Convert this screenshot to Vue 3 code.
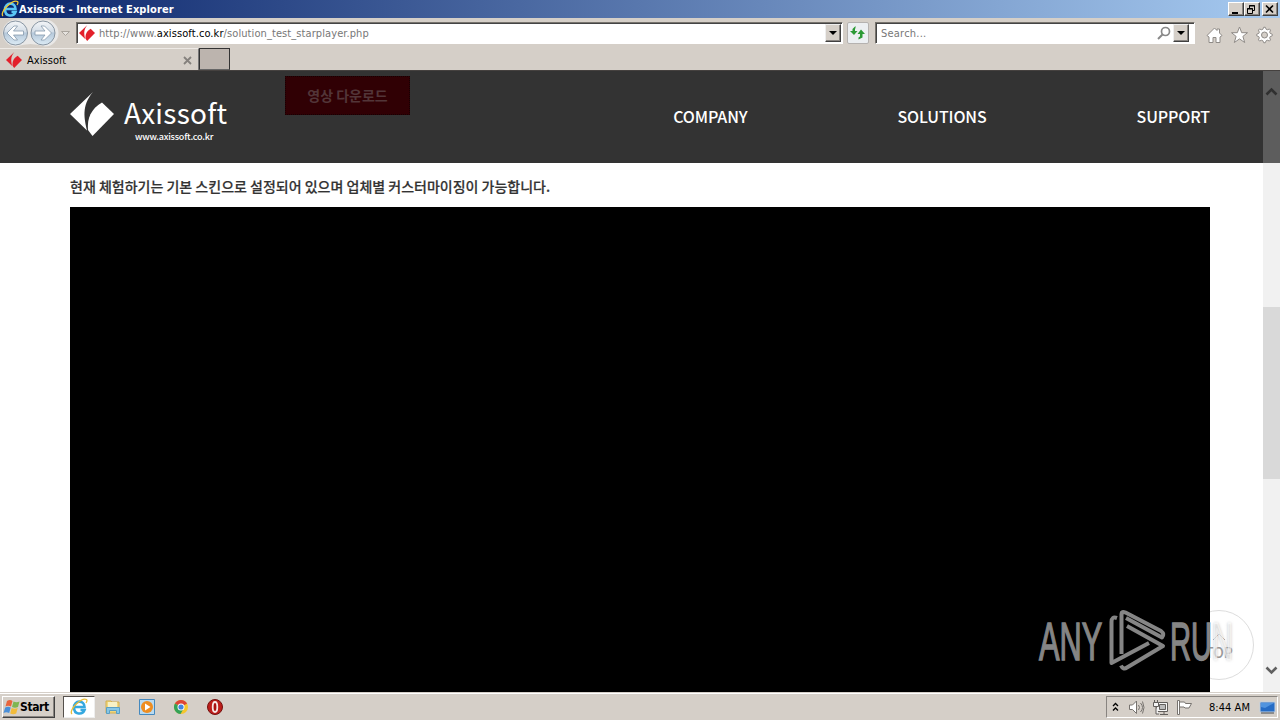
<template>
  <div class="screen">
    <div class="titlebar">
      <svg class="ie" width="18" height="18" viewBox="0 0 18 18">
        <path d="M4 9h10.500C14.500 1.500 4 2 4 9.500s8.500 7.500 10.500 2.500h-4" fill="none" stroke="#5bc5f5" stroke-width="2.600" />
        <path d="M2 16C-2 12 12-1 16.500 1.500c1 1 .5 2-.5 3.500" fill="none" stroke="#f2ca35" stroke-width="1.300" />
      </svg>
      <span class="title">Axissoft - Internet Explorer</span>
      <div class="winbtns">
        <button><svg width="13" height="11"><path d="M3 8h6v2H3z" /></svg></button>
        <button><svg width="13" height="11"><path d="M4.500 4V1.500h5v5H8M4 2h6M2.500 4.500h5v5h-5zM2 5h6" fill="none" stroke="#000" /></svg></button>
        <button class="gap"><svg width="13" height="11"><path d="M3 1.500l7 7M10 1.500l-7 7" stroke="#000" stroke-width="1.600" /></svg></button>
      </div>
    </div>

    <div class="navbar">
      <svg class="arrows" width="75" height="30" viewBox="0 0 75 30">
        <defs>
          <linearGradient id="orb" x1="0" y1="0" x2="0" y2="1">
            <stop offset="0" stop-color="#f4f6f8" /><stop offset=".45" stop-color="#d3dde7" />
            <stop offset=".5" stop-color="#b5c8da" /><stop offset="1" stop-color="#dcebf5" />
          </linearGradient>
        </defs>
        <path d="M15 1.500h29a13 13 0 0 1 0 27Q36 26 29.500 26T15 28.500a13 13 0 0 1 0-27z" fill="#e9e8e7" />
        <g v-for="x in [14.5, 42]" :key="x">
          <circle :cx="x" cy="15" r="12" fill="url(#orb)" stroke="#8996a3" />
          <path :transform="`translate(${x} 15) scale(${x > 20 ? -1 : 1} 1)`" d="M-8.500 0l7-7h3.500L-2-2H8v4H-2l4 5h-3.500z" fill="#fff" stroke="#8599ac" stroke-width=".8" />
        </g>
        <path d="M60.500 13.500h8l-4 4z" fill="#e6e3df" stroke="#aaa59e" />
      </svg>
      <div class="field address">
        <svg class="fav" width="16" height="16" viewBox="0 0 44 44"><path :d="logoLeft" /><path :d="logoRight" /></svg>
        <span class="url">http://www.<b>axissoft.co.kr</b>/solution_test_starplayer.php</span>
        <span class="drop"><i></i></span>
      </div>
      <div class="refresh">
        <svg width="18" height="18" viewBox="0 0 18 18" fill="#2b9a35"><path d="M1 7h2.500V5l3-3v2L6 5v2h2.500L5 11zM8.500 10L12 5.500 16 10h-2.500v3.500l-4 2v-2l1.500-1V10z" /></svg>
      </div>
      <div class="field search">
        <span>Search...</span>
        <svg width="14" height="15" viewBox="0 0 14 15"><circle cx="8.500" cy="5.500" r="4" fill="none" stroke="#888" stroke-width="1.700" /><path d="M5.500 8.500L1 13" stroke="#888" stroke-width="2" /></svg>
        <span class="drop"><i></i></span>
      </div>
      <div class="tools">
        <svg width="17" height="18" viewBox="0 0 17 18"><path d="M1 9.500L8.500 2l2.500 2.500V3h2.500v4L16 9.500 14 11v5.500h-4v-5H7v5H3V11z" /></svg>
        <svg width="17" height="18" viewBox="0 0 17 18"><path d="M8.500 1l2.200 5.700h5.800l-4.600 3.700 1.800 6.100-5.200-3.600-5.200 3.600 1.800-6.100L.5 6.700h5.800z" /></svg>
        <svg width="17" height="18" viewBox="0 0 17 18"><path :d="gear" /><circle cx="8.500" cy="9" r="3" fill="#d5cfc8" /></svg>
      </div>
    </div>

    <div class="tabs">
      <div class="tab">
        <svg class="fav" width="16" height="16" viewBox="0 0 44 44"><path :d="logoLeft" /><path :d="logoRight" /></svg>
        <span>Axissoft</span>
        <svg class="close" width="9" height="9"><path d="M1 1l7 7M8 1L1 8" stroke="#85817d" stroke-width="1.800" /></svg>
      </div>
      <div class="newtab"></div>
    </div>

    <div class="viewport">
      <div class="page">
        <header>
          <div class="brand">
            <svg width="44" height="44" viewBox="0 0 44 44"><path :d="logoLeft" /><path :d="logoRight" /></svg>
            <div class="names">
              <span class="name">Axissoft</span>
              <span class="site">www.axissoft.co.kr</span>
            </div>
          </div>
          <a class="download">영상 다운로드</a>
          <nav>
            <a v-for="m in menu" :key="m">{{ m }}</a>
          </nav>
        </header>
        <p class="notice">현재 체험하기는 기본 스킨으로 설정되어 있으며 업체별 커스터마이징이 가능합니다.</p>
        <div class="player"></div>
        <div class="top"><svg width="14" height="8"><path d="M1 7l6-6 6 6" fill="none" stroke="#aaa" /></svg><span>TOP</span></div>
      </div>
      <div class="scrollbar">
        <div class="dark"><svg width="13" height="9"><path d="M1.500 7.500l5-5 5 5" fill="none" stroke="#303030" stroke-width="2.600" /></svg></div>
        <div class="thumb"></div>
        <svg class="down" width="13" height="9"><path d="M1.500 1.500l5 5 5-5" fill="none" stroke="#606060" stroke-width="2.600" /></svg>
      </div>

      <div class="watermark">
        <span class="any">ANY</span>
        <svg width="58" height="64" viewBox="0 0 58 64" fill="none" stroke="#858585" stroke-width="4" stroke-linejoin="round">
          <path d="M9 9Q3.500 7 3.500 13V54L41 34" />
          <path d="M13.500 45V5q0-3 4-1.500L53 22q4 3 1 6.500L18 9" />
          <path d="M19 17L55 37 19 58.500q-4 2.500-6-2" />
        </svg>
        <span class="run">RU<i>N</i></span>
      </div>
    </div>

    <div class="taskbar">
      <button class="start">
        <svg width="18" height="17" viewBox="0 0 18 17">
          <path d="M4 2q3-2 5.500 0L8 7.500Q5 6 2.500 7.500z" fill="#e9653c" />
          <path d="M10.500 2.500q3 1.500 6 0L15 8q-3 1.500-6 0z" fill="#7fb652" />
          <path d="M2.200 8.500q3-1.500 5.500 0L6.200 14q-3-1.500-5.700 0z" fill="#4a8fd8" />
          <path d="M8.700 9q3 1.500 6 0l-1.500 5.500q-3 1.500-6 0z" fill="#f2bc3b" />
        </svg>
        <span>Start</span>
      </button>
      <div class="task">
        <svg width="18" height="18" viewBox="0 0 18 18">
          <path d="M4 9h10.500C14.500 1.500 4 2 4 9.500s8.500 7.500 10.500 2.500h-4" fill="none" stroke="#35a8df" stroke-width="2.600" />
          <path d="M2 16C-2 12 12-1 16.500 1.500c1 1 .5 2-.5 3.500" fill="none" stroke="#e9bd38" stroke-width="1.300" />
        </svg>
      </div>
      <div class="quick">
        <svg width="18" height="18" viewBox="0 0 18 18"><path d="M2 3h5l1 1h7v11H2z" fill="#f0d67d" stroke="#d2af51" /><path d="M4 4h9v5H4z" fill="#f7f1c6" /><path d="M2.500 9.500h13v6h-3v-3h-7v3h-3z" fill="#86c6e6" stroke="#5a9fc4" /></svg>
        <svg width="18" height="18" viewBox="0 0 18 18"><path d="M1.500 1.500h15v15h-15z" fill="#b9daf0" stroke="#4589be" /><circle cx="9" cy="9" r="6" fill="#ee8d20" /><path d="M7 5.500v7l5.500-3.500z" fill="#fff" /></svg>
        <svg width="18" height="18" viewBox="0 0 18 18"><circle cx="9" cy="9" r="7" fill="#f5c62d" /><path d="M9 9L2.900 5.500A7 7 0 0 1 15.100 5.500z" fill="#dd4437" /><path d="M9 9L2.900 5.500A7 7 0 0 0 8.500 16l3.500-6z" fill="#35a257" /><circle cx="9" cy="9" r="3.500" fill="#fff" /><circle cx="9" cy="9" r="2.600" fill="#4384e0" /></svg>
        <svg width="18" height="18" viewBox="0 0 18 18"><circle cx="9" cy="9" r="7.500" fill="#bd1e1b" stroke="#74100e" /><ellipse cx="9" cy="9" rx="2.300" ry="5" fill="#aa1110" stroke="#f6e7e5" stroke-width="1.800" /></svg>
      </div>
      <div class="tray">
        <svg width="7" height="10"><path d="M1 4l2.500-2.500L6 4M1 8.500L3.500 6 6 8.500" fill="none" stroke="#000" stroke-width="1.300" /></svg>
        <svg class="vol" width="17" height="17" fill="#fff" stroke="#77736f"><path d="M1.500 6h3l4-4v12.500l-4-4h-3z" /><path d="M10.500 6q2 2.500 0 5M12.500 4q4 4.500 0 9M14.500 2.500q3 6 0 12" fill="none" /></svg>
        <svg class="net" width="18" height="17" fill="#f5f5f5" stroke="#625f5c"><path d="M4.500 3.500h11v9h-11zM8 15.500h8M12 13v2" /><path d="M7.500 5.500h6v5h-6z" fill="#bbb" /><path d="M1.500 3.500h5v4h-5zM2.500 1v2M5.500 1v2M4 8v7h3" /></svg>
        <svg class="flag" width="17" height="17" fill="#fff" stroke="#77736f"><path d="M1.500 1.500h2v14h-2zM3.500 3h5l1 1.500h6L13 9H9L8 8H3.500z" /></svg>
        <time>8:44 AM</time>
        <svg class="desk" width="17" height="15"><path d="M1 2h15v10H1z" fill="#266cc5" stroke="#c1d0e0" /><path d="M2 3h13l-9 5-4-1z" fill="#5194df" /><path d="M2 13h13" stroke="#474b50" /></svg>
      </div>
    </div>
  </div>
</template>

<script setup>
const menu = ["COMPANY", "SOLUTIONS", "SUPPORT"];

// both halves of the diamond mark
const logoLeft = "M23 0L0 22 17 38.500C14.500 27 11 14 23 0z";
const logoRight = "M32 10.500L44 22 22.500 44 18 38C17 26 21 17 32 10.500z";

// outline of an eight toothed wheel
const gear = "M" + Array.from({ length: 32 }, (_, i) => {
  const r = i % 4 < 2 ? 7.8 : 5.9;
  const a = (i - 0.5) * Math.PI / 16;
  return (8.5 + r * Math.cos(a)).toFixed(2) + " " + (9 + r * Math.sin(a)).toFixed(2);
}).join("L") + "z";
</script>

<style>
body {
  overflow: hidden;
}
</style>

<style scoped>
* {
  box-sizing: border-box;
}

.screen {
  width: 1280px;
  height: 720px;
  display: flex;
  flex-direction: column;
  background: #d5cfc8;
  font: 11px "DejaVu Sans Condensed", "DejaVu Sans", sans-serif;
  overflow: hidden;
}

svg {
  display: block;
  flex: none;
}

.titlebar {
  height: 18px;
  flex: none;
  display: flex;
  align-items: center;
  padding: 0 2px 0 1px;
  background: linear-gradient(90deg, #0b256b, #a6caf0);
  color: #fff;
  font-weight: bold;
}

.title {
  width: 160px;
  white-space: nowrap;
  letter-spacing: 0.1px;
}

.winbtns {
  margin-left: auto;
  display: flex;
}

button {
  padding: 0;
  border: 1px solid;
  border-color: #fff #404040 #404040 #fff;
  background: #d5cfc8;
  box-shadow: inset -1px -1px #888480;
  color: #000;
  font: inherit;
}

.winbtns button {
  width: 16px;
  height: 14px;
}

.winbtns .gap {
  margin-left: 2px;
}

.navbar {
  height: 30px;
  flex: none;
  display: flex;
  align-items: flex-start;
  padding-left: 1px;
}

.field {
  display: flex;
  align-items: center;
  height: 22px;
  margin-top: 4px;
  background: #fff;
  border: 1px solid;
  border-color: #77736d #fff #fff #77736d;
  box-shadow: inset 1px 1px #444;
  color: #777;
}

.address {
  width: 767px;
  padding: 0 2px;
}

.fav {
  fill: #e3202b;
}

.url {
  margin-left: 4px;
  padding-top: 1px;
  white-space: nowrap;
  letter-spacing: 0.09px;
}

.url b {
  font-weight: normal;
  color: #000;
}

.drop {
  width: 16px;
  height: 18px;
  display: flex;
  align-items: center;
  justify-content: center;
  background: #d5cfc8;
  border: 1px solid;
  border-color: #eee #404040 #404040 #eee;
  box-shadow: inset -1px -1px #888480;
}

.address .drop {
  margin-left: auto;
  margin-right: -1px;
}

.drop i {
  border: 4px solid transparent;
  border-top-color: #000;
  border-bottom: 0;
}

.refresh {
  width: 22px;
  height: 22px;
  margin: 4px 6px 0 4px;
  padding: 1px;
  border: 1px solid #b5b2b0;
  border-radius: 2px;
  background: #eceff2;
}

.search {
  width: 320px;
  padding: 0 5px 0 5px;
}

.search svg {
  margin: 0 2px 0 auto;
}

.search > span:first-child {
  padding-top: 1px;
  letter-spacing: 0.22px;
}

.tools {
  display: flex;
  gap: 8px;
  margin: 8px 0 0 11px;
}

.tools svg {
  fill: #fff;
  stroke: #8f8b87;
}

.tabs {
  height: 23px;
  flex: none;
  display: flex;
  border-bottom: 1px solid #45413f;
}

.tab {
  width: 199px;
  display: flex;
  align-items: center;
  padding: 1px 6px 0;
  border-top: 1px solid #eeeae6;
  border-right: 1px solid #777;
}

.tab span {
  margin-left: 5px;
  letter-spacing: 0.05px;
}

.close {
  margin-left: auto;
}

.newtab {
  width: 31px;
  border: 1px solid #333;
  border-bottom-color: #666;
  background: #bcb4ae;
}

.viewport {
  position: relative;
  height: 621px;
  flex: none;
  display: flex;
  background: #fff;
}

.page {
  position: relative;
  width: 1263px;
  font-family: "Noto Sans CJK KR", sans-serif;
}

header {
  height: 92px;
  display: flex;
  background: #333;
  padding: 0 53px 0 70px;
  color: #fff;
}

.brand {
  display: flex;
  width: 215px;
  padding-top: 21px;
}

.brand > svg {
  fill: #fff;
}

.names {
  display: flex;
  flex-direction: column;
  margin-left: 10px;
}

.name {
  font: 28px/40px "Noto Sans CJK KR", sans-serif;
  letter-spacing: 0.25px;
}

.site {
  font: 500 9px/10px "Noto Sans CJK KR", sans-serif;
  padding-left: 11px;
  letter-spacing: -0.2px;
}

.download {
  width: 125px;
  height: 39px;
  margin-top: 5px;
  border: 1px dotted #160002;
  background: #300004;
  color: #523538;
  font: bold 14px/36px "Noto Sans CJK KR", sans-serif;
  text-align: center;
}

nav {
  display: flex;
  gap: 150px;
  margin-left: auto;
  font: 500 16px/91px "Noto Sans CJK KR", sans-serif;
  letter-spacing: -0.12px;
}

.notice {
  margin: 0;
  height: 44px;
  padding-left: 70px;
  color: #333;
  font: 500 14px/46px "Noto Sans CJK KR", sans-serif;
  -webkit-text-stroke: 0.2px;
  white-space: nowrap;
}

.player {
  position: relative;
  z-index: 1;
  width: 1140px;
  height: 485px;
  margin-left: 70px;
  background: #000;
}

.top {
  position: absolute;
  left: 1184px;
  top: 539px;
  width: 70px;
  height: 70px;
  display: flex;
  flex-direction: column;
  align-items: center;
  padding-top: 22px;
  border: 1px solid #ddd;
  border-radius: 50%;
  color: #999;
  font: 500 14px/23px "Noto Sans CJK KR", sans-serif;
}

.scrollbar {
  width: 17px;
  display: flex;
  flex-direction: column;
  align-items: center;
  background: #f1f1f1;
}

.dark {
  width: 17px;
  height: 92px;
  padding: 16px 2px;
  background: #5d5d5d;
}

.thumb {
  width: 17px;
  height: 172px;
  margin-top: 144px;
  background: #d9d9d9;
}

.down {
  margin-top: 187px;
}

.watermark {
  position: absolute;
  z-index: 2;
  left: 1039px;
  top: 538px;
  display: flex;
  height: 64px;
  color: #858585;
  font: 53px/66px "Liberation Sans Narrow", "Liberation Sans", sans-serif;
  -webkit-text-stroke: 1.5px;
}

/* condensed capitals either side of the triangle */
.any,
.run {
  width: 69px;
  transform: scaleX(0.58);
  transform-origin: 0 50%;
}

.run {
  width: 62px;
  margin-left: 4px;
  transform: scaleX(0.55);
  white-space: nowrap;
}

.run i {
  font-style: normal;
  color: rgba(255, 255, 255, 0.55);
  text-shadow: 0 0 4px rgba(130, 130, 130, 0.6);
}

.taskbar {
  height: 28px;
  flex: none;
  display: flex;
  align-items: center;
  padding: 1px 2px 0;
  border-top: 1px solid #d5cfc8;
  box-shadow: inset 0 1px #fff;
}

.start {
  width: 53px;
  height: 22px;
  display: flex;
  align-items: center;
  font-weight: bold;
  font-size: 12px;
  letter-spacing: -0.4px;
}

.start svg {
  margin-right: -1px;
}

.task {
  width: 32px;
  height: 22px;
  margin-left: 8px;
  padding: 1px 6px;
  background: #fff;
  border: 1px solid;
  border-color: #55514d #eee #eee #55514d;
}

.quick {
  display: flex;
  gap: 16px;
  margin-left: 9px;
}

.tray {
  width: 172px;
  height: 22px;
  display: flex;
  align-items: center;
  margin-left: auto;
  padding-left: 5px;
  border: 1px solid;
  border-color: #888480 #fff #fff #888480;
}

.vol {
  margin-left: 9px;
}

.net,
.flag {
  margin-left: 7px;
}

.flag {
  margin-left: 6px;
}

time {
  width: 44px;
  margin-left: 16px;
  white-space: nowrap;
  letter-spacing: 0.05px;
}

.desk {
  margin-left: 6px;
}
</style>
